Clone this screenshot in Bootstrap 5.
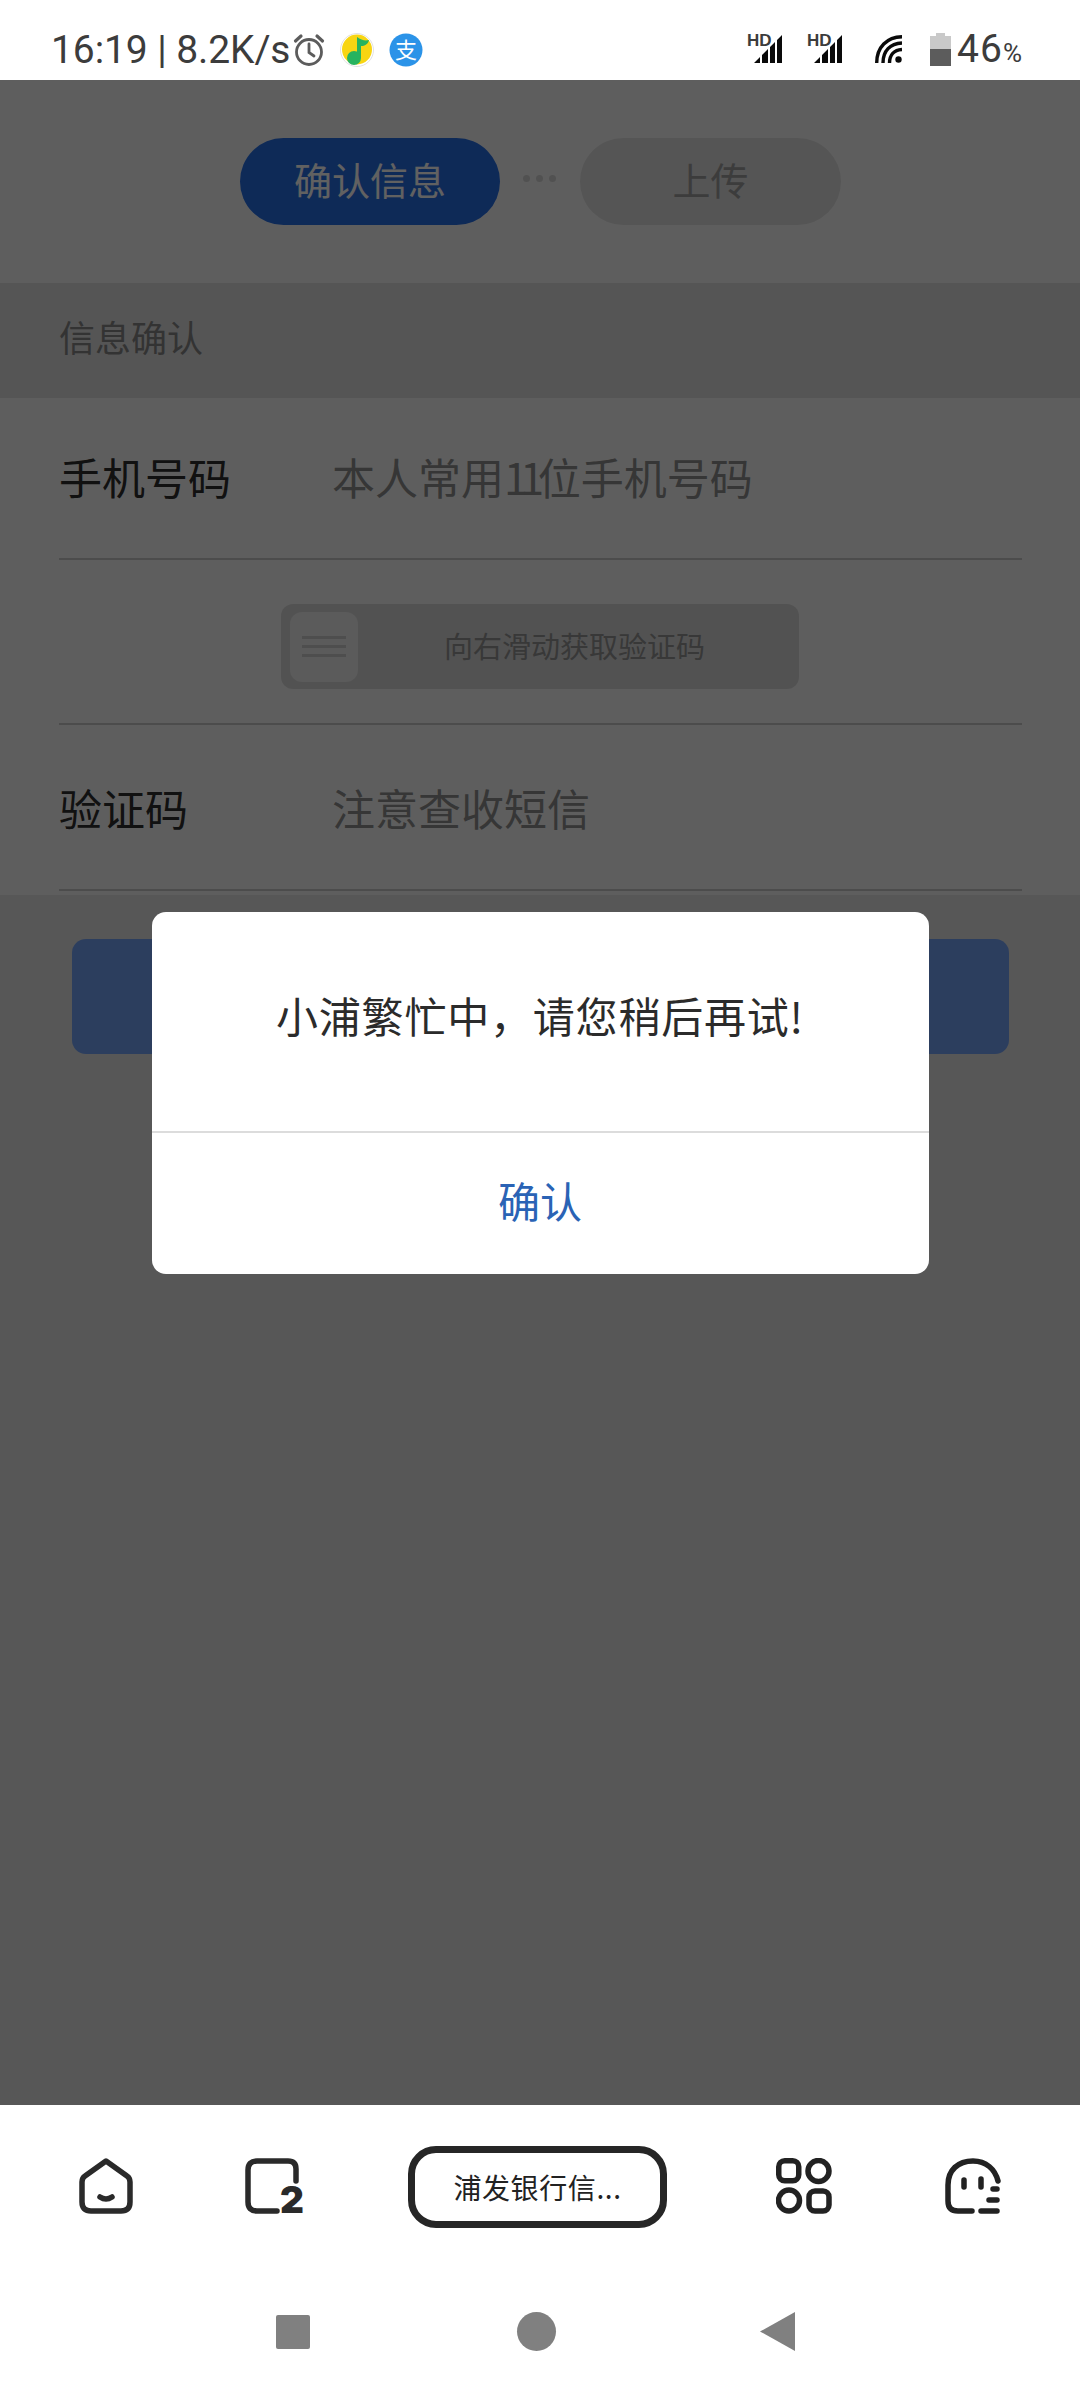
<!DOCTYPE html>
<html lang="zh">
<head>
<meta charset="utf-8">
<link href="https://cdn.jsdelivr.net/npm/bootstrap@5.3.0/dist/css/bootstrap.min.css" rel="stylesheet">
<style>
html,body{width:1080px;height:2400px;overflow:hidden;background:#fff}
body{font-family:"Noto Sans CJK SC","Liberation Sans",sans-serif}
.shell{height:2400px}
.sbar{height:80px;padding:33px 58px 0 51px;color:#3c3c3c;font-family:Roboto,"Liberation Sans",sans-serif}
.sclock{font-size:39px;line-height:32px;width:242px;white-space:nowrap;letter-spacing:-.1px}
.sleft svg{display:block;margin-right:15px}
.sright svg{display:block}
.sighd{margin-top:-6px}
.spct{font-size:39px;line-height:32px;letter-spacing:1px;margin-left:6px;white-space:nowrap}
.spct small{font-size:26px;letter-spacing:0}
.web{height:2025px;background:#e4e4e4}
.steps{height:203px;background:#f8f8f8;padding:58px 0 0 240px}
.pillstep{width:260px;height:87px;border-radius:44px;font-size:38px;line-height:81px;text-align:center;color:#fff;background:#276ee5}
.pillstep.off{width:261px;background:#e0e0e0;color:#9e9e9e;margin-left:80px}
.stepdots{width:0;position:relative}
.stepdots i{position:absolute;left:23px;top:37px;width:7px;height:7px;background:#d4d4d4;border-radius:50%;box-shadow:13px 0 #d4d4d4,26px 0 #d4d4d4}
.sechead{height:115px;background:#e0e0e0;color:#868686;font-size:36px;padding:0 0 9px 59px}
.formbox{background:#f8f8f8;padding:0 58px 4px 59px;height:497px}
.frow{border-bottom:2px solid #c8c8c8;font-size:43px}
.frow.r1{height:162px;padding-bottom:3px}
.frow.r2{height:165px;padding-top:44px;padding-left:222px;align-items:flex-start!important}
.frow.r3{height:166px}
.flabel{width:273px;color:#2d2d2d}
.fhint{color:#8e8e8e}
.fhint b{font-weight:400;letter-spacing:-7.5px;margin-right:1px}
.slidebox{width:518px;height:85px;background:#d8d8d8;border-radius:12px;padding:8px 9px;font-size:29px;color:#939393}
.slidethumb{width:68px;height:70px;border-radius:12px;background:#eeeeee;gap:6px}
.slidethumb i{display:block;width:44px;height:3px;background:#cccccc}
.slidetxt{margin-left:86px;padding-bottom:2px}
.nextbtn{display:block;width:937px;height:115px;margin:44px 0 0 72px;border:0;border-radius:14px;background:#74a3f7}
.dim{inset:0;background:rgba(0,0,0,.62);padding-top:832px}
.dlg{width:777px;height:362px;background:#fff;border-radius:14px}
.dlgmsg{height:219px;font-size:42px;color:#2b2b2b;padding-bottom:14px;letter-spacing:.8px}
.dlgok{height:143px;border-top:2px solid #dcdcdc;font-size:42px;color:#2a63b5;padding-bottom:9px}
.tools{height:295px}
.toolrow{padding:41px 0 0 79px;height:123px}
.urlpill{width:259px;height:82px;border:7px solid #262626;border-radius:28px;font-size:28px;color:#222;letter-spacing:.6px;margin-left:98px}
.ictop{margin-top:12px;display:block;flex:none}
.ictab{margin-left:112px;height:72px}
.icgrid{margin-left:109px}
.icghost{margin-left:113px}
.navrow{padding:84px 0 0 276px}
.navsq{width:34px;height:34px;background:#808080;border-radius:2px}
.navci{width:39px;height:39px;background:#808080;border-radius:50%;margin-left:207px}
.navtri{margin-left:204px;display:block}
</style>
</head>
<body>
<div class="shell d-flex flex-column">
  <div class="sbar d-flex align-items-start">
    <div class="sleft d-flex align-items-center">
      <div class="sclock">16:19 | 8.2K/s</div>
      <svg width="32" height="34" viewBox="0 0 32 34" fill="none" stroke="#5c5c5c" stroke-width="2.800"><circle cx="16" cy="19" r="12.500"/><path d="M16 11v8.500l5 3.500" stroke-linecap="round"/><path d="M2.500 8 8 3M29.500 8 24 3" stroke-width="3.200" stroke-linecap="round"/></svg>
      <svg width="34" height="34" viewBox="0 0 34 34"><circle cx="17" cy="17" r="16.500" fill="#fff" stroke="#e2e2e2"/><circle cx="17" cy="16.500" r="15" fill="#f8d512"/><circle cx="14" cy="25" r="7" fill="#27b35f"/><path d="M17 4v21h4V13c4 0 7-2 8-6-4 1-8 0-12-3z" fill="#27b35f"/></svg>
      <svg width="34" height="34" viewBox="0 0 34 34"><circle cx="17" cy="17" r="16.500" fill="#2b93e8"/><text x="17" y="25" text-anchor="middle" font-size="22" fill="#fff" font-family="Noto Sans CJK SC">支</text></svg>
    </div>
    <div class="sright ms-auto d-flex align-items-start">
      <svg class="sighd" width="35" height="38" viewBox="0 -6 35 38" style="margin-right:25px"><text x="0" y="13" font-size="17" font-weight="700" fill="#3c3c3c" font-family="Liberation Sans">HD</text><path d="M7 30l6-6v6zM15 30v-8l6-6v14zM23 30V14l5-5v21zM30 30V7l5-5v28z" fill="#0a0a0a"/></svg>
      <svg class="sighd" width="35" height="38" viewBox="0 -6 35 38" style="margin-right:33px"><text x="0" y="13" font-size="17" font-weight="700" fill="#3c3c3c" font-family="Liberation Sans">HD</text><path d="M7 30l6-6v6zM15 30v-8l6-6v14zM23 30V14l5-5v21zM30 30V7l5-5v28z" fill="#0a0a0a"/></svg>
      <svg width="27" height="28" viewBox="0 0 27 28" fill="none" stroke="#0a0a0a" stroke-width="3.400" style="margin:2px 28px 0 0"><path d="M1.700 28C1.700 12 12 2 27 1.700"/><path d="M8 28C8 16 15 8.500 27 8"/><path d="M14.500 28C14.500 20 19 15 27 14.500"/><circle cx="23.500" cy="24.500" r="3.200" fill="#0a0a0a" stroke="none"/></svg>
      <svg width="21" height="33" viewBox="0 0 21 33"><path d="M6 0h9v3h6v13H0V3h6z" fill="#c9c9c9"/><rect y="16" width="21" height="17" fill="#5c5c5c"/></svg>
      <div class="spct">46<small>%</small></div>
    </div>
  </div>

  <div class="web position-relative">
    <div class="steps d-flex align-items-start">
      <div class="pillstep">确认信息</div>
      <div class="stepdots"><i></i></div>
      <div class="pillstep off">上传</div>
    </div>
    <div class="sechead d-flex align-items-center">信息确认</div>
    <div class="formbox">
      <div class="frow r1 d-flex align-items-center"><span class="flabel">手机号码</span><span class="fhint">本人常用<b>11</b>位手机号码</span></div>
      <div class="frow r2 d-flex">
        <div class="slidebox d-flex align-items-center">
          <div class="slidethumb d-flex flex-column align-items-center justify-content-center"><i></i><i></i><i></i></div>
          <span class="slidetxt">向右滑动获取验证码</span>
        </div>
      </div>
      <div class="frow r3 d-flex align-items-center"><span class="flabel">验证码</span><span class="fhint">注意查收短信</span></div>
    </div>
    <button class="nextbtn btn" type="button" aria-label="下一步"></button>

    <div class="dim position-absolute d-flex flex-column align-items-center">
      <div class="dlg d-flex flex-column">
        <div class="dlgmsg d-flex align-items-center justify-content-center">小浦繁忙中，请您稍后再试!</div>
        <div class="dlgok d-flex align-items-center justify-content-center">确认</div>
      </div>
    </div>
  </div>

  <div class="tools bg-white">
    <div class="toolrow d-flex align-items-start">
      <svg class="ictop" width="54" height="56" viewBox="0 0 54 56" fill="none" stroke="#2a2a2a" stroke-width="5.500" stroke-linejoin="round" stroke-linecap="round"><path d="M27 3 48 18q3 2 3 6v20q0 9-9 9H12q-9 0-9-9V24q0-4 3-6z"/><path d="M21 39q6 4 12 0"/></svg>
      <svg class="ictop ictab" width="65" height="72" viewBox="0 0 65 72"><path d="M32 53H12q-9 0-9-9V12q0-9 9-9h31q8 0 8 8v12" fill="none" stroke="#2a2a2a" stroke-width="5.500" stroke-linecap="round"/><text x="47" y="55" text-anchor="middle" font-size="37" font-weight="900" fill="#2a2a2a" font-family="Inter,Liberation Sans">2</text></svg>
      <div class="urlpill d-flex align-items-center justify-content-center">浦发银行信...</div>
      <svg class="ictop icgrid" width="56" height="56" viewBox="0 0 56 56" fill="none" stroke="#222" stroke-width="5.500"><rect x="2.750" y="2.750" width="20" height="20" rx="6"/><circle cx="42.500" cy="13" r="10.500"/><circle cx="13" cy="42.500" r="10.500"/><rect x="33" y="33" width="20" height="20" rx="6"/></svg>
      <svg class="ictop icghost" width="56" height="56" viewBox="0 0 56 56" fill="none" stroke="#222" stroke-width="5.500" stroke-linecap="round"><path d="M27 53H13q-10 0-10-10V27C3 12 13 3 28 3c13 0 22 8 25 20"/><path d="M19 22v7M36 21v8M48 31h4M44 42h8M36 53h16"/></svg>
    </div>
    <div class="navrow d-flex align-items-center">
      <div class="navsq"></div>
      <div class="navci"></div>
      <svg class="navtri" width="36" height="39" viewBox="0 0 36 39"><path d="M0 19.500 35 0v39z" fill="#808080"/></svg>
    </div>
  </div>
</div>
<script src="https://cdn.jsdelivr.net/npm/bootstrap@5.3.0/dist/js/bootstrap.bundle.min.js"></script>
</body>
</html>
